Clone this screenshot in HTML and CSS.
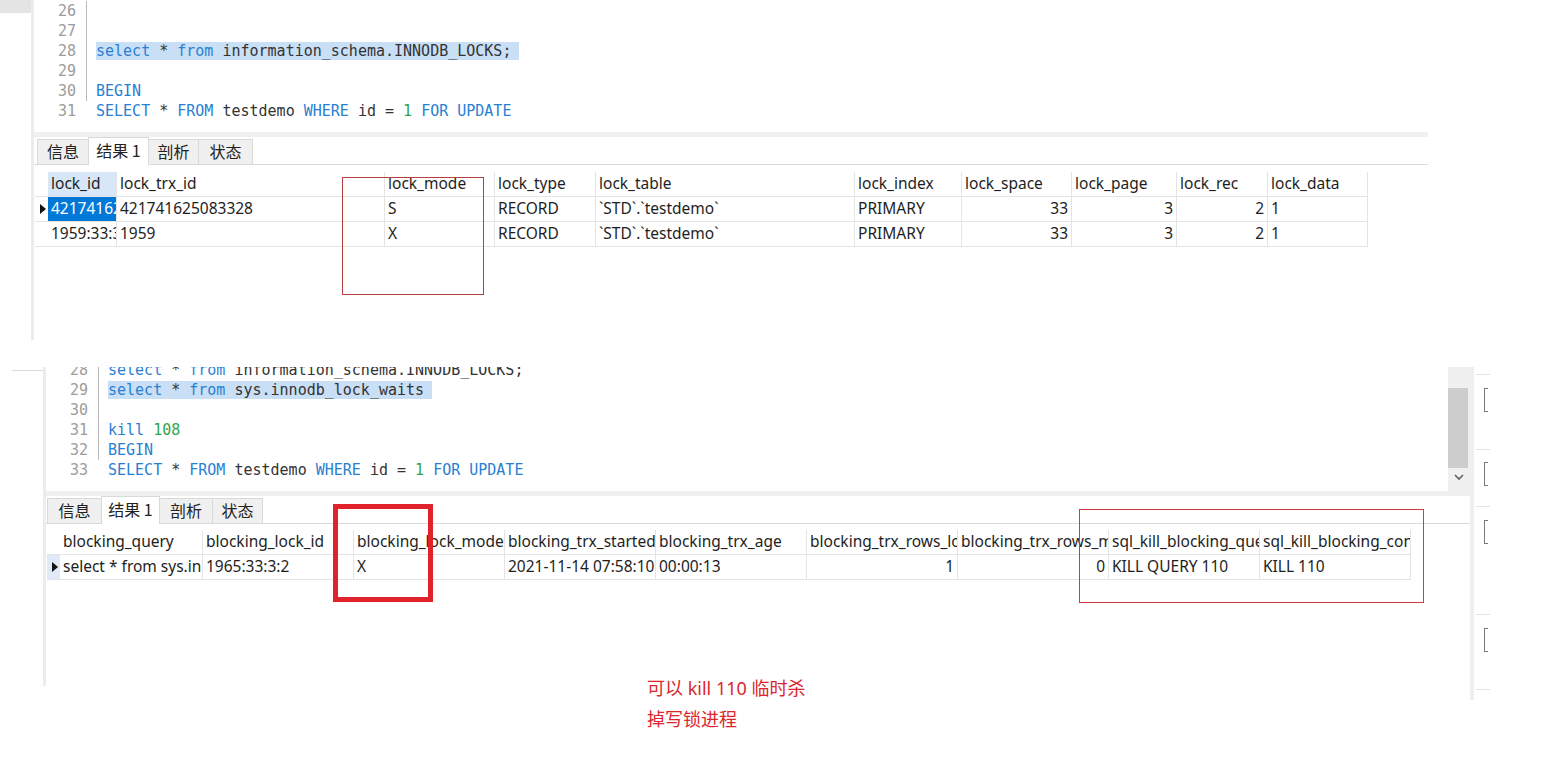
FILE: index.html
```html
<!DOCTYPE html>
<html lang="zh-CN">
<head>
<meta charset="utf-8">
<title>InnoDB locks</title>
<link rel="stylesheet" href="styles.css">
</head>
<body>
<section class="shot shot1">
  <div class="side1"><div class="corner"></div></div>
  <div class="main main1">
    <div class="editor editor1">
      <div class="lines lines1">
        <div class="line"><span class="ln">26</span><span class="src guide"> </span></div>
        <div class="line"><span class="ln">27</span><span class="src guide"> </span></div>
        <div class="line"><span class="ln">28</span><span class="src guide"><span class="sel"><span class="kw">select</span> * <span class="kw">from</span> information_schema.INNODB_LOCKS;</span></span></div>
        <div class="line"><span class="ln">29</span><span class="src guide"> </span></div>
        <div class="line"><span class="ln">30</span><span class="src guide"><span class="kw">BEGIN</span></span></div>
        <div class="line"><span class="ln">31</span><span class="src"><span class="kw">SELECT</span> * <span class="kw">FROM</span> testdemo <span class="kw">WHERE</span> id = <span class="nm">1</span> <span class="kw">FOR UPDATE</span></span></div>
      </div>
    </div>
    <div class="sep"></div>
    <div class="tabs tabs1">
      <div class="tab w51">信息</div>
      <div class="tab active w60">结果 1</div>
      <div class="tab w50">剖析</div>
      <div class="tab w54">状态</div>
    </div>
    <div class="grid grid1">
      <div class="row head">
        <div class="cell ind"></div>
        <div class="cell colsel">lock_id</div>
        <div class="cell">lock_trx_id</div>
        <div class="cell">lock_mode</div>
        <div class="cell">lock_type</div>
        <div class="cell">lock_table</div>
        <div class="cell">lock_index</div>
        <div class="cell">lock_space</div>
        <div class="cell">lock_page</div>
        <div class="cell">lock_rec</div>
        <div class="cell">lock_data</div>
      </div>
      <div class="row">
        <div class="cell ind"><span class="tri"></span></div>
        <div class="cell cursel">421741625083328:33:3:2</div>
        <div class="cell">421741625083328</div>
        <div class="cell">S</div>
        <div class="cell">RECORD</div>
        <div class="cell">`STD`.`testdemo`</div>
        <div class="cell">PRIMARY</div>
        <div class="cell num">33</div>
        <div class="cell num">3</div>
        <div class="cell num">2</div>
        <div class="cell">1</div>
      </div>
      <div class="row">
        <div class="cell ind"></div>
        <div class="cell">1959:33:3:2</div>
        <div class="cell">1959</div>
        <div class="cell">X</div>
        <div class="cell">RECORD</div>
        <div class="cell">`STD`.`testdemo`</div>
        <div class="cell">PRIMARY</div>
        <div class="cell num">33</div>
        <div class="cell num">3</div>
        <div class="cell num">2</div>
        <div class="cell">1</div>
      </div>
    </div>
  </div>
</section>

<section class="shot shot2">
  <div class="side2"><div class="side2-line"></div></div>
  <div class="main main2">
    <div class="editor editor2">
      <div class="lines lines2">
        <div class="line"><span class="ln">28</span><span class="src guide"><span class="kw">select</span> * <span class="kw">from</span> information_schema.INNODB_LOCKS;</span></div>
        <div class="line"><span class="ln">29</span><span class="src guide"><span class="sel"><span class="kw">select</span> * <span class="kw">from</span> sys.innodb_lock_waits</span></span></div>
        <div class="line"><span class="ln">30</span><span class="src guide"> </span></div>
        <div class="line"><span class="ln">31</span><span class="src guide"><span class="kw">kill</span> <span class="nm">108</span></span></div>
        <div class="line"><span class="ln">32</span><span class="src guide"><span class="kw">BEGIN</span></span></div>
        <div class="line"><span class="ln">33</span><span class="src"><span class="kw">SELECT</span> * <span class="kw">FROM</span> testdemo <span class="kw">WHERE</span> id = <span class="nm">1</span> <span class="kw">FOR UPDATE</span></span></div>
      </div>
      <div class="vscroll">
        <div class="thumb"></div>
        <svg class="chev" width="10" height="7" viewBox="0 0 10 7"><polyline points="1,1 5,5 9,1" fill="none" stroke="#5f5f5f" stroke-width="1.6"/></svg>
      </div>
    </div>
    <div class="sep"></div>
    <div class="tabs tabs2">
      <div class="tab w54">信息</div>
      <div class="tab active w58">结果 1</div>
      <div class="tab w53">剖析</div>
      <div class="tab w50">状态</div>
    </div>
    <div class="grid grid2">
      <div class="row head">
        <div class="cell ind"></div>
        <div class="cell">blocking_query</div>
        <div class="cell">blocking_lock_id</div>
        <div class="cell">blocking_lock_mode</div>
        <div class="cell">blocking_trx_started</div>
        <div class="cell">blocking_trx_age</div>
        <div class="cell">blocking_trx_rows_locked</div>
        <div class="cell">blocking_trx_rows_modified</div>
        <div class="cell">sql_kill_blocking_query</div>
        <div class="cell">sql_kill_blocking_connection</div>
      </div>
      <div class="row">
        <div class="cell ind indsel"><span class="tri"></span></div>
        <div class="cell">select * from sys.innodb_lock_waits</div>
        <div class="cell">1965:33:3:2</div>
        <div class="cell">X</div>
        <div class="cell">2021-11-14 07:58:10</div>
        <div class="cell">00:00:13</div>
        <div class="cell num">1</div>
        <div class="cell num">0</div>
        <div class="cell">KILL QUERY 110</div>
        <div class="cell">KILL 110</div>
      </div>
    </div>
  </div>
  <div class="rstrip"></div>
  <div class="rpanel">
    <div class="rp-line m7"></div>
    <div class="rp-br m13"></div>
    <div class="rp-line m37"></div>
    <div class="rp-br m12"></div>
    <div class="rp-line m20"></div>
    <div class="rp-br m13"></div>
    <div class="rp-line m70"></div>
    <div class="rp-br m13"></div>
    <div class="rp-line m37"></div>
  </div>
</section>

<div class="mark mark1"></div>
<div class="mark mark2"></div>
<div class="mark mark3"></div>

<div class="note">可以 kill 110 临时杀<br>掉写锁进程</div>
</body>
</html>
```
FILE: styles.css
```css
* { box-sizing: border-box; }
html, body { margin: 0; padding: 0; background: #fff; }
body {
  width: 1548px;
  height: 775px;
  overflow: hidden;
  position: relative;
  font-family: "Noto Sans", "Noto Sans CJK SC", sans-serif;
  color: #222;
}

.shot { display: flex; align-items: flex-start; }
.shot1 { height: 340px; }
.shot2 { height: 333px; margin-top: 27px; }

.side1 { width: 31px; flex: none; }
.corner { height: 13px; background: #e4e4e4; }

.side2 { width: 43px; flex: none; padding-left: 12px; padding-top: 3px; }
.side2-line { height: 1px; background: #dadada; }

.main {
  border-left: 3px solid #ececec;
  display: flex;
  flex-direction: column;
  flex: none;
}
.main1 { width: 1397px; height: 340px; }
.main2 { width: 1427px; height: 319px; }

/* editor */
.editor {
  display: flex;
  overflow: hidden;
  flex: none;
  font-family: "DejaVu Sans Mono", "Liberation Mono", monospace;
  font-size: 15px;
}
.editor1 { height: 132px; }
.editor2 { height: 124px; }
.lines { flex: 1; }
.lines1 { margin-top: 1px; }
.lines2 { margin-top: -7px; }
.line { display: flex; height: 20px; line-height: 20px; white-space: pre; }
.ln { width: 42px; text-align: right; color: #9c9c9c; flex: none; }
.src {
  margin-left: 10px;
  padding-left: 9px;
  border-left: 1px solid transparent;
  color: #333;
}
.guide { border-left-color: #b9b9b9; }
.kw { color: #2a7fd2; }
.nm { color: #2fa64c; }
.sel { background: #c9dff6; padding-right: 8px; }

.vscroll {
  width: 22px;
  flex: none;
  background: #f0f0f0;
  display: flex;
  flex-direction: column;
}
.thumb { width: 20px; height: 80px; margin-top: 21px; background: #cdcdcd; }
.chev { margin-top: 6px; margin-left: 6px; display: block; }

.sep { height: 5px; background: #f0f0f0; flex: none; }

/* tabs */
.tabs {
  display: flex;
  align-items: flex-end;
  height: 28px;
  border-bottom: 1px solid #dadada;
  flex: none;
  font-family: "Noto Sans CJK SC", sans-serif;
  font-size: 16px;
}
.tabs1 { padding-left: 3px; }
.tabs2 { padding-left: 1px; }
.tab {
  height: 25px;
  line-height: 23px;
  text-align: center;
  background: #f0f0f0;
  border: 1px solid #d9d9d9;
  border-bottom: none;
  color: #222;
}
.tab + .tab { margin-left: -1px; }
.tab.active {
  height: 28px;
  margin-bottom: -1px;
  background: #fff;
  line-height: 25px;
  position: relative;
}
.w50 { width: 51px; }
.w51 { width: 52px; }
.w53 { width: 54px; }
.w54 { width: 55px; }
.w58 { width: 59px; }
.w60 { width: 61px; }

/* grids */
.grid { margin-left: 1px; font-size: 15.5px; }
.grid1 { margin-top: 7px; width: 1333px; }
.grid2 { margin-top: 6px; width: 1364px; }
.row { display: grid; height: 25px; border-bottom: 1px solid #e4e4e4; }
.grid1 .row { grid-template-columns: 13px 69px 268px 110px 101px 259px 107px 110px 105px 91px 100px; }
.grid2 .row { grid-template-columns: 13px 143px 151px 151px 151px 151px 151px 151px 151px 151px; }
.cell {
  padding: 0 3px;
  line-height: 23px;
  white-space: nowrap;
  overflow: hidden;
  border-right: 1px solid #e4e4e4;
  color: #1e1e1e;
}
.cell.ind {
  border-right: none;
  padding: 0;
  display: flex;
  align-items: center;
  justify-content: center;
}
.indsel { background: #dfeaf6; }
.num { text-align: right; }
.colsel { background: #d7e7f7; }
.cursel { background: #0078d7; color: #fff; }
.tri {
  width: 0;
  height: 0;
  border-left: 6px solid #111;
  border-top: 5px solid transparent;
  border-bottom: 5px solid transparent;
  margin-left: 2px;
}

/* right side panel */
.rstrip { width: 4px; height: 333px; background: #efefef; flex: none; }
.rpanel { width: 74px; flex: none; display: flex; flex-direction: column; }
.rp-line { width: 14px; height: 1px; margin-left: 2px; background: #e3e3e3; }
.rp-br {
  width: 4px;
  height: 24px;
  margin-left: 10px;
  border: 1.5px solid #7a7a7a;
  border-right: none;
}
.m7 { margin-top: 7px; }
.m12 { margin-top: 12px; }
.m13 { margin-top: 13px; }
.m20 { margin-top: 20px; }
.m37 { margin-top: 37px; }
.m70 { margin-top: 70px; }

/* annotations */
.mark { position: absolute; }
.mark1 { left: 342px; top: 177px; width: 142px; height: 118px; border: 1px solid #b5403f; }
.mark2 { left: 333px; top: 504px; width: 100px; height: 98px; border: 5px solid #e1222a; }
.mark3 { left: 1079px; top: 509px; width: 345px; height: 94px; border: 1px solid #d23a40; }

.note {
  position: absolute;
  left: 647px;
  top: 673px;
  color: #dc262c;
  font-family: "Noto Sans", "Noto Sans CJK SC", sans-serif;
  font-size: 18px;
  line-height: 31px;
}
```
